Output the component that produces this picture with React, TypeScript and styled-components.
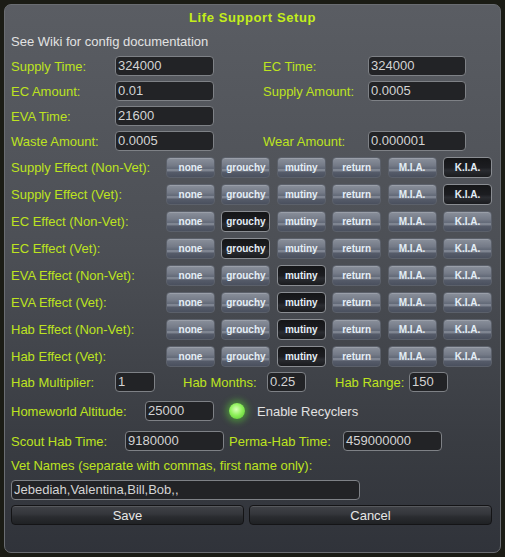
import React from "react";
import styled, { createGlobalStyle } from "styled-components";

const Global = createGlobalStyle`
  html, body { margin: 0; padding: 0; background: #1b1c15; }
  body { font-family: "Liberation Sans", Arial, sans-serif; }
  * { box-sizing: border-box; }
`;

const Panel = styled.div`
  margin: 4px;
  width: 497px;
  height: 549px;
  border-radius: 7px;
  border: 1px solid #6a6d72;
  background: linear-gradient(#5a5d63 0%, #4c4f55 45%, #393c42 80%, #30333a 100%);
  padding: 3px 6px 0 6px;
  display: flex;
  flex-direction: column;
  font-size: 13px;
`;

const Title = styled.div`
  height: 20px;
  text-align: center;
  font-weight: bold;
  font-size: 13px;
  letter-spacing: 0.6px;
  line-height: 20px;
  color: #c4ee1a;
`;

const Note = styled.div`
  height: 16px;
  margin-top: 6px;
  line-height: 16px;
  color: #e2e2e2;
`;

const Row = styled.div<{ $mt: number; $h?: number }>`
  display: flex;
  align-items: center;
  height: ${(p) => p.$h ?? 20}px;
  margin-top: ${(p) => p.$mt}px;
`;

const Label = styled.span<{ $w?: number; $ml?: number }>`
  color: #bde320;
  white-space: nowrap;
  width: ${(p) => (p.$w ? `${p.$w}px` : "auto")};
  margin-left: ${(p) => p.$ml ?? 0}px;
  flex-shrink: 0;
`;

const Input = styled.div<{ $w: number }>`
  width: ${(p) => p.$w}px;
  height: 20px;
  flex-shrink: 0;
  background: #222326;
  border: 1px solid #7e8186;
  border-radius: 4px;
  color: #d4d4d4;
  padding-left: 2px;
  line-height: 18px;
  white-space: nowrap;
  overflow: hidden;
`;

const Buttons = styled.div`
  display: grid;
  grid-template-columns: repeat(6, 49px);
  column-gap: 6.4px;
  height: 21px;
`;

const Choice = styled.div<{ $on?: boolean }>`
  height: 21px;
  border-radius: 4px;
  display: flex;
  align-items: center;
  justify-content: center;
  font-size: 10px;
  font-weight: bold;
  color: #e4eef6;
  border: 1px solid ${(p) => (p.$on ? "#8a8d92" : "#5b606a")};
  background: ${(p) =>
    p.$on
      ? "linear-gradient(#151618 0%, #1c1d21 50%, #2a2c31 65%, #1a1b1e 100%)"
      : "linear-gradient(#8a909b 0%, #747a87 40%, #636a78 55%, #8c929e 63%, #555b69 75%, #4a505e 100%)"};
  box-shadow: ${(p) => (p.$on ? "none" : "inset 0 1px 0 rgba(255,255,255,0.15)")};
`;

const Check = styled.div`
  width: 16px;
  height: 16px;
  border-radius: 50%;
  margin-left: 15px;
  background: radial-gradient(circle at 45% 40%, #d8ffb8 0%, #8ef05a 45%, #4fc02a 100%);
  box-shadow: 0 0 6px 3px rgba(90, 220, 50, 0.45);
`;

const CheckText = styled.span`
  color: #e2e2e2;
  margin-left: 12px;
`;

const BigButton = styled.div<{ $w: number }>`
  width: ${(p) => p.$w}px;
  height: 20px;
  border-radius: 4px;
  border: 1px solid #141416;
  background: linear-gradient(#404247 0%, #34363b 45%, #2a2c30 60%, #1f2124 100%);
  box-shadow: inset 0 1px 0 rgba(255, 255, 255, 0.12);
  color: #e6e6e6;
  display: flex;
  align-items: center;
  justify-content: center;
`;

const ButtonRow = styled.div`
  display: flex;
  gap: 5px;
  margin-top: 5px;
`;

const OPTIONS = ["none", "grouchy", "mutiny", "return", "M.I.A.", "K.I.A."];
const EFFECTS: [string, number][] = [
  ["Supply Effect (Non-Vet):", 5],
  ["Supply Effect (Vet):", 5],
  ["EC Effect (Non-Vet):", 1],
  ["EC Effect (Vet):", 1],
  ["EVA Effect (Non-Vet):", 2],
  ["EVA Effect (Vet):", 2],
  ["Hab Effect (Non-Vet):", 2],
  ["Hab Effect (Vet):", 2],
];

export default function App() {
  return (
    <>
      <Global />
      <Panel>
        <Title>Life Support Setup</Title>
        <Note>See Wiki for config documentation</Note>

        <Row $mt={6}>
          <Label $w={104}>Supply Time:</Label>
          <Input $w={99}>324000</Input>
          <Label $w={105} $ml={49}>EC Time:</Label>
          <Input $w={98}>324000</Input>
        </Row>
        <Row $mt={5}>
          <Label $w={104}>EC Amount:</Label>
          <Input $w={99}>0.01</Input>
          <Label $w={105} $ml={49}>Supply Amount:</Label>
          <Input $w={98}>0.0005</Input>
        </Row>
        <Row $mt={5}>
          <Label $w={104}>EVA Time:</Label>
          <Input $w={99}>21600</Input>
        </Row>
        <Row $mt={5}>
          <Label $w={104}>Waste Amount:</Label>
          <Input $w={99}>0.0005</Input>
          <Label $w={105} $ml={49}>Wear Amount:</Label>
          <Input $w={98}>0.000001</Input>
        </Row>

        {EFFECTS.map(([name, sel]) => (
          <Row key={name} $mt={6} $h={21}>
            <Label $w={155}>{name}</Label>
            <Buttons>
              {OPTIONS.map((o, j) => (
                <Choice key={o} $on={j === sel}>
                  {o}
                </Choice>
              ))}
            </Buttons>
          </Row>
        ))}

        <Row $mt={5}>
          <Label $w={104}>Hab Multiplier:</Label>
          <Input $w={40}>1</Input>
          <Label $w={84} $ml={28}>Hab Months:</Label>
          <Input $w={39}>0.25</Input>
          <Label $w={74} $ml={29}>Hab Range:</Label>
          <Input $w={39}>150</Input>
        </Row>
        <Row $mt={9}>
          <Label $w={134}>Homeworld Altitude:</Label>
          <Input $w={69}>25000</Input>
          <Check />
          <CheckText>Enable Recyclers</CheckText>
        </Row>
        <Row $mt={10}>
          <Label $w={114}>Scout Hab Time:</Label>
          <Input $w={99}>9180000</Input>
          <Label $w={114} $ml={5}>Perma-Hab Time:</Label>
          <Input $w={99}>459000000</Input>
        </Row>
        <Row $mt={6} $h={16}>
          <Label>Vet Names (separate with commas, first name only):</Label>
        </Row>
        <Row $mt={7}>
          <Input $w={349}>Jebediah,Valentina,Bill,Bob,,</Input>
        </Row>
        <ButtonRow>
          <BigButton $w={233}>Save</BigButton>
          <BigButton $w={243}>Cancel</BigButton>
        </ButtonRow>
      </Panel>
    </>
  );
}
